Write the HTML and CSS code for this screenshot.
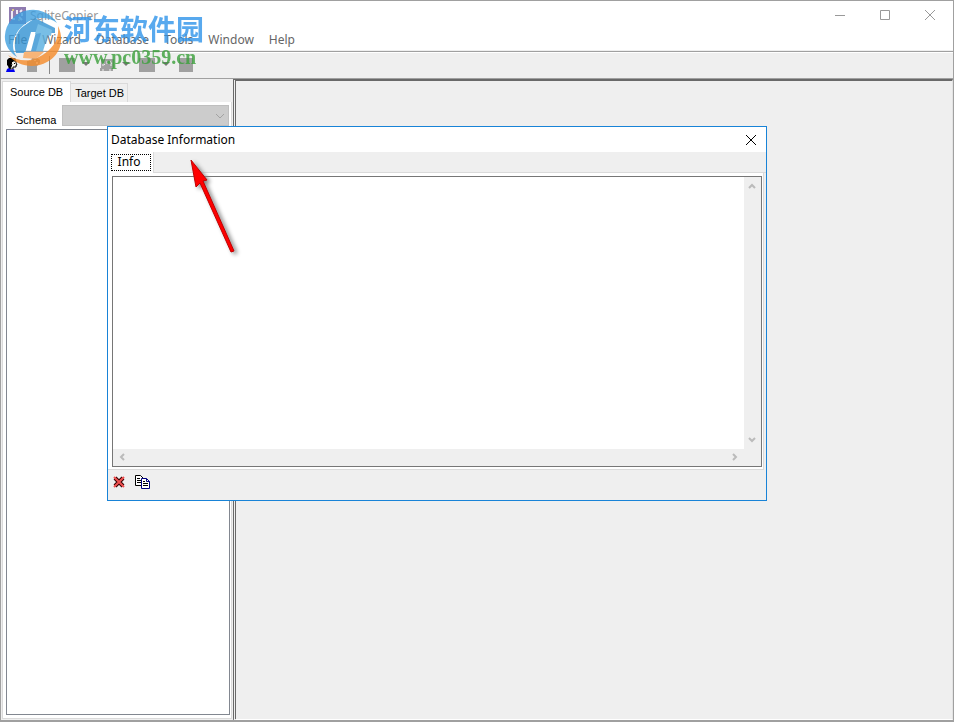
FILE: index.html
```html
<!DOCTYPE html>
<html lang="en">
<head>
    <meta charset="UTF-8">
    <meta name="viewport" content="width=device-width, initial-scale=1.0">
    <title>SqliteCopier</title>
    <link rel="stylesheet" href="styles.css">
</head>
<body>
    <div class="window">
        <header class="titlebar">
            <svg class="app-icon" width="17" height="17" viewBox="0 0 17 17">
                <rect width="17" height="17" fill="#8f7bb0"/>
                <path d="M3 4v8M3 12h3M8 3v4M11 5l2-2M10 10l3 3M13 6v3" stroke="#eee9f5" stroke-width="2" fill="none"/>
                <path d="M3 3h2M9 13h2" stroke="#d8c98a" stroke-width="2"/>
            </svg>
            <h1 class="app-title">SqliteCopier</h1>
            <div class="window-buttons">
                <button type="button" aria-label="Minimize"><svg width="12" height="12" viewBox="0 0 12 12"><path d="M1 6.500h10"/></svg></button>
                <button type="button" aria-label="Maximize"><svg width="12" height="12" viewBox="0 0 12 12"><path d="M1.500 1.500h9v9h-9z"/></svg></button>
                <button type="button" aria-label="Close"><svg width="12" height="12" viewBox="0 0 12 12"><path d="M1 1l10 10M11 1L1 11"/></svg></button>
            </div>
        </header>

        <nav class="menubar">
            <button type="button">File</button>
            <button type="button">Wizard</button>
            <button type="button">Database</button>
            <button type="button">Tools</button>
            <button type="button">Window</button>
            <button type="button">Help</button>
        </nav>

        <div class="toolbar">
            <button type="button" class="tool" aria-label="Connect">
                <svg width="16" height="16" viewBox="0 0 16 16">
                    <path d="M5 1h5l2 1v2h-2l-1 2-1-1-1 2 1 3-1 2H5L4 9 3 8V3z" fill="#000"/>
                    <path d="M9 4h3v2l1 2h-1v2H9v2H6l1-2 1-3-1-1z" fill="#f4f4ec" stroke="#000"/>
                    <path d="M10 6h1v1h-1z" fill="#000"/>
                    <path d="M2 15l1-3 2-1 2 2 3-1 1 3z" fill="#0000f0"/>
                </svg>
            </button>
            <button type="button" class="tool" aria-label="Disconnect">
                <svg width="16" height="16" viewBox="0 0 16 16">
                    <path d="M6 1h5l3 2v3l-3 3v6H1V4h4z" fill="#a0a0a0"/>
                    <path d="M8 3h2v1H8zM10 5h2v2h-2z" fill="#efefef"/>
                </svg>
            </button>
            <span class="divider"></span>
            <button type="button" class="tool wide" aria-label="Open table">
                <svg width="16" height="16" viewBox="0 0 16 16"><path d="M0 1h16v14H0z" fill="#a0a0a0"/></svg>
                <svg width="8" height="16" viewBox="0 0 8 16"><path d="M0 5h8L4 9z" fill="#777"/></svg>
            </button>
            <button type="button" class="tool wide" aria-label="Query">
                <svg width="16" height="16" viewBox="0 0 16 16">
                    <path d="M2 2h13v9H2zM1 11h13v3H1z" fill="#a0a0a0"/>
                    <path d="M4 9V6l2 2M8 4v3M11 4l2 3M11 8h2M4 12v2M11 12v2" stroke="#efefef" fill="none"/>
                </svg>
                <svg width="8" height="16" viewBox="0 0 8 16"><path d="M0 5h8L4 9z" fill="#777"/></svg>
            </button>
            <button type="button" class="tool wide" aria-label="Copy table">
                <svg width="16" height="16" viewBox="0 0 16 16"><path d="M0 1h16v14H0z" fill="#a0a0a0"/></svg>
                <svg width="8" height="16" viewBox="0 0 8 16"><path d="M0 5h8L4 9z" fill="#777"/></svg>
            </button>
            <button type="button" class="tool" aria-label="Stop">
                <svg width="14" height="16" viewBox="0 0 14 16"><path d="M0 1h14v14H0z" fill="#a0a0a0"/></svg>
            </button>
        </div>

        <main class="workspace">
            <aside class="sidebar">
                <div class="tabs">
                    <button type="button" class="tab active">Source DB</button>
                    <button type="button" class="tab">Target DB</button>
                </div>
                <div class="tab-page">
                    <div class="schema-row">
                        <label for="schema">Schema</label>
                        <div class="select-wrap">
                            <select id="schema" disabled></select>
                            <svg class="select-arrow" width="10" height="6" viewBox="0 0 10 6"><path d="M1 1l4 4 4-4" fill="none" stroke="#a3a3a3"/></svg>
                        </div>
                    </div>
                    <div class="tree"></div>
                </div>
            </aside>
            <section class="client"></section>
        </main>
    </div>

    <section class="dialog" role="dialog" aria-labelledby="dialog-title">
        <header class="dialog-title">
            <h2 id="dialog-title">Database Information</h2>
            <button type="button" aria-label="Close dialog"><svg width="12" height="12" viewBox="0 0 12 12"><path d="M1 1l10 10M11 1L1 11"/></svg></button>
        </header>
        <div class="dialog-tabs">
            <button type="button" class="info-tab"><span>Info</span></button>
        </div>
        <div class="dialog-page">
            <div class="memo">
                <textarea aria-label="Info" readonly></textarea>
                <div class="scroll-y">
                    <svg width="8" height="6" viewBox="0 0 8 6"><path d="M1 5l3-3 3 3"/></svg>
                    <svg width="8" height="6" viewBox="0 0 8 6"><path d="M1 1l3 3 3-3"/></svg>
                </div>
                <div class="scroll-x">
                    <svg width="6" height="8" viewBox="0 0 6 8"><path d="M5 1L2 4l3 3"/></svg>
                    <svg width="6" height="8" viewBox="0 0 6 8"><path d="M1 1l3 3-3 3"/></svg>
                </div>
            </div>
        </div>
        <div class="dialog-tools">
            <button type="button" aria-label="Clear">
                <svg width="12" height="12" viewBox="0 0 12 12">
                    <path d="M2 2l8 8M10 2l-8 8" stroke="#300" stroke-width="4"/>
                    <path d="M1 1l10 10M11 1L1 11" stroke="#f05050" stroke-width="2"/>
                </svg>
            </button>
            <button type="button" aria-label="Copy">
                <svg width="16" height="14" viewBox="0 0 16 14">
                    <path d="M.5.5h5l3 3v7h-8z" fill="#fff" stroke="#000"/>
                    <path d="M2 3.500h3M2 5.500h4M2 7.500h4" stroke="#000"/>
                    <path d="M6.500 3.500h5l3 3v7h-8z" fill="#fff" stroke="#000080"/>
                    <path d="M11.500 3.500v3h3" fill="none" stroke="#000080"/>
                    <path d="M8 6.500h2M8 8.500h5M8 10.500h5" stroke="#000"/>
                </svg>
            </button>
        </div>
    </section>

    <svg class="pointer" width="60" height="110" viewBox="0 0 60 110">
        <path d="M5 4L10 31l4-4 31 69 3-1-31-70 4-1z" fill="#f00" stroke="#c00000"/>
    </svg>

    <div class="watermark">
        <svg class="mark-logo" width="60" height="60" viewBox="0 0 60 60">
            <path d="M1 26A28 27 0 0 1 53 14C42 5 24 8 14 22 7 32 8 42 13 48 5 43 0 35 1 26z" fill="#3f9fdf"/>
            <path d="M17 19L31 9l20 10v5h-9l-5 18H27l5-19h-5l-6 21h-9C9 34 12 25 17 19z" fill="#3292d3"/>
            <path d="M34 15l14 6-1 6-3-1-5 16h-7l5-18-6 1z" fill="#57afe0"/>
            <path d="M54 17C60 29 58 45 43 53 31 60 14 58 4 46 18 55 32 52 44 42 52 35 55 27 54 17z" fill="#f68b28"/>
            <path d="M20 43h20l-8 7-13-1z" fill="#f9a65a"/>
        </svg>
        <div class="mark-text">
            <span class="mark-name">河东软件园</span>
            <span class="mark-url">www.pc0359.cn</span>
        </div>
    </div>
</body>
</html>
```

FILE: styles.css
```css
* {
    box-sizing: border-box;
}

body {
    margin: 0;
    font-family: "Noto Sans", sans-serif;
    font-size: 12px;
    color: #000;
    background-color: #efefef;
}

button {
    margin: 0;
    padding: 0;
    border: none;
    background: none;
    font: inherit;
    color: inherit;
}

svg {
    display: block;
}

h1,
h2 {
    margin: 0;
    font-size: 12px;
    font-weight: normal;
}

.window {
    display: flex;
    flex-direction: column;
    height: 100vh;
    border: 1px solid #a0a0a0;
    border-bottom-width: 2px;
    background-color: #efefef;
}

/* title and menu */
.titlebar {
    display: flex;
    align-items: center;
    height: 28px;
    padding: 0 1px 0 8px;
    background-color: #fff;
}

.app-title {
    flex: 1;
    padding-left: 4px;
    color: #999;
}

.window-buttons {
    display: flex;
}

.window-buttons button {
    display: flex;
    align-items: center;
    justify-content: center;
    width: 45px;
    height: 28px;
}

.window-buttons path,
.dialog-title path {
    fill: none;
    stroke: #999;
}

.menubar {
    display: flex;
    gap: 1px;
    height: 22px;
    background-color: #fff;
    border-bottom: 1px solid #efefef;
    color: #666;
}

.menubar button {
    padding: 0 7px;
    line-height: 22px;
}

.toolbar {
    display: flex;
    align-items: center;
    height: 28px;
    padding-left: 3px;
    border-top: 1px solid #a0a0a0;
    border-bottom: 1px solid #a0a0a0;
    box-shadow: inset 0 1px #fff;
}

.tool {
    display: flex;
    align-items: center;
    width: 22px;
}

.tool.wide {
    gap: 7px;
    width: 40px;
}

.divider {
    width: 1px;
    height: 18px;
    margin: 0 9px 0 1px;
    background-color: #888;
}

/* left panel */
.workspace {
    display: flex;
    flex: 1;
    min-height: 0;
}

.sidebar {
    display: flex;
    flex-direction: column;
    width: 232px;
    padding: 2px 1px 1px;
    font-family: "Liberation Sans", sans-serif;
    font-size: 11px;
}

.tabs {
    display: flex;
    align-items: flex-end;
    height: 21px;
}

.tab {
    height: 19px;
    padding: 0 3px 0 4px;
    border: 1px solid #dadada;
    border-left: none;
    border-bottom: none;
}

.tab.active {
    height: 21px;
    padding: 0 7px;
    border-left: 1px solid #dadada;
    background-color: #fff;
}

.tab-page {
    display: flex;
    flex-direction: column;
    flex: 1;
    padding: 3px 1px 3px 3px;
    border: 1px solid #dadada;
    border-top: none;
    background-color: #fff;
}

.schema-row {
    display: flex;
    align-items: flex-end;
    gap: 6px;
    height: 21px;
    margin-bottom: 3px;
    padding: 0 1px 0 10px;
}

.select-wrap {
    position: relative;
    flex: 1;
}

.select-wrap select {
    display: block;
    width: 100%;
    height: 21px;
    border: 1px solid #bfbfbf;
    border-radius: 0;
    background-color: #ccc;
    appearance: none;
    opacity: 1;
}

.select-arrow {
    position: absolute;
    top: 8px;
    right: 4px;
}

.tree {
    flex: 1;
    border: 1px solid #828790;
}

.client {
    flex: 1;
    border: 2px solid #696969;
    border-left: 3px double #696969;
    border-right: 1px solid #e3e3e3;
    border-bottom: 1px solid #fff;
}

/* database information dialog */
.dialog {
    position: absolute;
    top: 126px;
    left: 107px;
    display: flex;
    flex-direction: column;
    width: 660px;
    height: 375px;
    border: 1px solid #1883d7;
    background-color: #efefef;
}

.dialog-title {
    display: flex;
    align-items: center;
    justify-content: space-between;
    height: 25px;
    padding: 0 9px 0 3px;
    background-color: #fff;
}

.dialog-title path {
    stroke: #000;
}

.dialog-tabs {
    display: flex;
    height: 21px;
    border-bottom: 1px solid #dadada;
}

.info-tab {
    width: 46px;
    height: 21px;
    padding: 2px 2px 2px 3px;
    border-right: 1px solid #dadada;
    background-color: #fff;
}

.info-tab span {
    display: block;
    height: 17px;
    padding-right: 4px;
    border: 1px dotted #000;
    line-height: 14px;
}

.dialog-page {
    display: flex;
    flex: 1;
    margin-right: 2px;
    padding: 3px 1px 2px 4px;
    border-right: 1px solid #dadada;
    border-bottom: 1px solid #dadada;
    background-color: #fff;
}

.memo {
    display: grid;
    grid-template-columns: 1fr 17px;
    grid-template-rows: 1fr 17px;
    flex: 1;
    border: 1px solid #767676;
    background-color: #efefef;
}

.memo textarea {
    width: 100%;
    height: 100%;
    border: none;
    outline: none;
    resize: none;
    background-color: #fff;
}

.memo path {
    fill: none;
    stroke: #bbb;
    stroke-width: 2;
}

.scroll-y,
.scroll-x {
    display: flex;
    align-items: center;
    justify-content: space-between;
    padding: 6px;
}

.scroll-y {
    flex-direction: column;
    padding: 6px 7px 6px 5px;
}

.scroll-x {
    padding: 5px 6px 7px;
}

.dialog-tools {
    display: flex;
    gap: 10px;
    align-items: center;
    height: 30px;
    padding: 0 5px 6px;
}

/* arrow over the dialog */
.pointer {
    position: absolute;
    top: 156px;
    left: 186px;
    filter: drop-shadow(3px 2px 2px #888);
}

/* site mark */
.watermark {
    position: absolute;
    top: 9px;
    left: 4px;
    display: flex;
    opacity: 0.8;
    pointer-events: none;
}

.mark-text {
    display: flex;
    flex-direction: column;
}

.mark-name {
    font-family: "Noto Sans CJK SC", sans-serif;
    font-size: 28px;
    font-weight: bold;
    line-height: 38px;
    color: #2f94ea;
}

.mark-url {
    font-family: "Liberation Serif", serif;
    font-size: 20px;
    font-weight: bold;
    line-height: 20px;
    color: #3aa03a;
}
```
